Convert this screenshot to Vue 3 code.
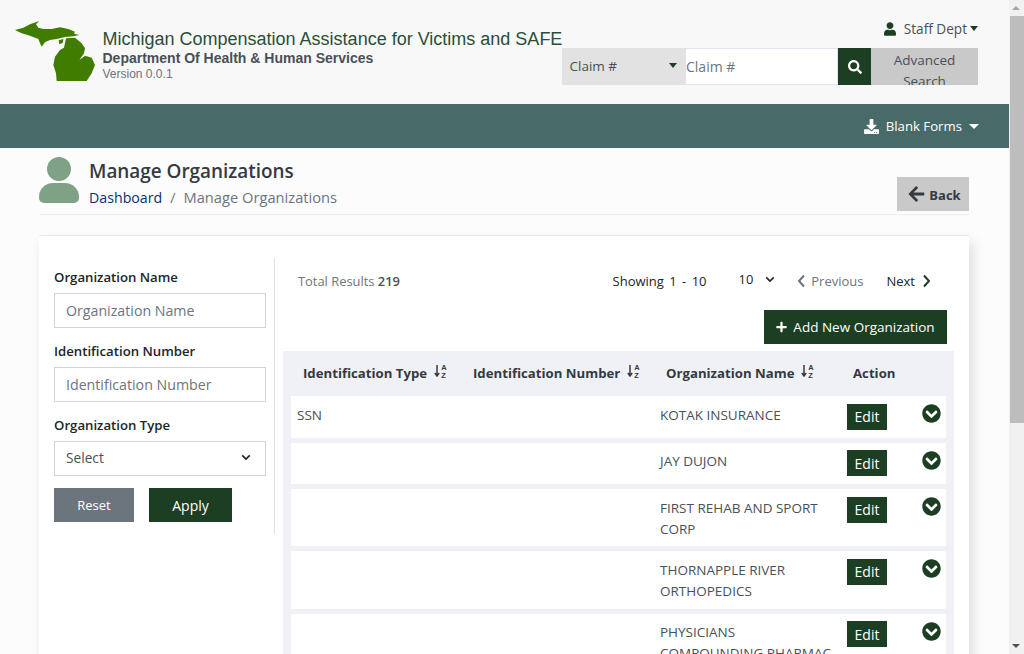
<template>
  <div class="page">
    <div class="main">
      <header class="top">
        <div class="brand">
          <svg class="logo" viewBox="15 15 240 183">
            <path d="M15 45 L40 38 L60 28 L88 18 L78 28 L85 38 L100 42 L125 42 L150 37 L175 42 L195 50 L192 56 L208 60 L190 64 L165 66 L140 72 L120 75 L105 82 L95 95 L90 85 L85 72 L60 62 L35 55 Z" />
            <path d="M168 70 L195 68 L215 85 L225 100 L222 115 L208 135 L225 122 L245 128 L255 150 L245 175 L230 198 L140 198 L138 175 L130 150 L135 125 L150 105 L162 98 Z" />
            <path d="M146 76 L160 72 L158 84 L148 88 Z" />
          </svg>
          <div class="brand-text">
            <div class="app-title">Michigan Compensation Assistance for Victims and SAFE</div>
            <div class="dept">Department Of Health &amp; Human Services</div>
            <div class="version">Version 0.0.1</div>
          </div>
        </div>
        <div class="top-right">
          <div class="user">
            <svg class="user-icon" viewBox="0 0 448 512"><path :d="icons.user" /></svg>
            <span>Staff Dept</span>
            <span class="caret"></span>
          </div>
          <div class="search">
            <div class="search-type">
              <span>Claim #</span>
              <span class="caret"></span>
            </div>
            <input class="search-input" placeholder="Claim #" />
            <button class="search-btn">
              <svg viewBox="0 0 512 512"><path :d="icons.search" /></svg>
            </button>
            <button class="adv-btn">Advanced Search</button>
          </div>
        </div>
      </header>

      <nav class="navbar">
        <svg class="dl-icon" viewBox="0 0 512 512"><path :d="icons.download" /></svg>
        <span>Blank Forms</span>
        <span class="caret caret-white"></span>
      </nav>

      <section class="page-head">
        <div class="avatar">
          <span class="avatar-head"></span>
          <span class="avatar-body"></span>
        </div>
        <div class="head-text">
          <h1>Manage Organizations</h1>
          <div class="crumbs">
            <a>Dashboard</a>
            <span class="sep">/</span>
            <span class="crumb-current">Manage Organizations</span>
          </div>
        </div>
        <button class="back-btn">
          <svg viewBox="0 0 448 512"><path :d="icons.arrowLeft" /></svg>
          Back
        </button>
      </section>

      <section class="card">
        <aside class="filters">
          <label>Organization Name</label>
          <input placeholder="Organization Name" />
          <label>Identification Number</label>
          <input placeholder="Identification Number" />
          <label>Organization Type</label>
          <div class="select-box">
            <span>Select</span>
            <svg class="chev" viewBox="0 0 12 8"><path d="M1.500 1.500 6 6l4.500-4.500" /></svg>
          </div>
          <div class="filter-btns">
            <button class="reset">Reset</button>
            <button class="apply">Apply</button>
          </div>
        </aside>

        <div class="results">
          <div class="toolbar">
            <span class="total">Total Results <b>219</b></span>
            <div class="pager">
              <span class="showing">Showing 1 - 10</span>
              <span class="per-page">10
                <svg class="chev" viewBox="0 0 12 8"><path d="M1.500 1.500 6 6l4.500-4.500" /></svg>
              </span>
              <span class="prev">
                <svg class="nav-chev" viewBox="0 0 9 14"><path d="M7 1.500 2 7l5 5.500" /></svg>
                Previous
              </span>
              <span class="next">
                Next
                <svg class="nav-chev" viewBox="0 0 9 14"><path d="M2 1.500 7 7l-5 5.500" /></svg>
              </span>
            </div>
          </div>
          <div class="add-row">
            <button class="add-btn">
              <svg viewBox="0 0 448 512"><path :d="icons.plus" /></svg>
              Add New Organization
            </button>
          </div>

          <div class="table">
            <div class="thead">
              <div v-for="col in columns" :key="col.label" class="th">
                {{ col.label }}
                <svg v-if="col.sort" class="sort" viewBox="0 0 14 14">
                  <path d="M3 1v11M.8 9l2.200 3 2.200-3" />
                  <text x="7.200" y="6" class="sort-a">A</text>
                  <text x="7.200" y="13.500" class="sort-a">Z</text>
                </svg>
              </div>
            </div>
            <div v-for="row in rows" :key="row.name" class="tr" :class="{ tall: row.tall }">
              <div class="td">{{ row.type }}</div>
              <div class="td">{{ row.name }}</div>
              <div><button class="edit">Edit</button></div>
              <svg class="expand" viewBox="0 0 512 512"><path :d="icons.chevronCircle" /></svg>
            </div>
          </div>
        </div>
      </section>
    </div>

    <div class="scrollbar">
      <span class="arrow-up"></span>
      <span class="thumb"></span>
      <span class="arrow-down"></span>
    </div>
  </div>
</template>

<script setup>
const icons = {
  user: "M224 256c70.7 0 128-57.3 128-128S294.7 0 224 0 96 57.3 96 128s57.3 128 128 128zm89.6 32h-16.7c-22.2 10.2-46.9 16-72.9 16s-50.6-5.8-72.9-16h-16.7C60.2 288 0 348.2 0 422.4V464c0 26.5 21.5 48 48 48h352c26.5 0 48-21.5 48-48v-41.6c0-74.2-60.2-134.4-134.4-134.400z",
  search: "M505 442.7L405.3 343c-4.5-4.5-10.6-7-17-7H372c27.6-35.3 44-79.7 44-128C416 93.1 322.9 0 208 0S0 93.1 0 208s93.1 208 208 208c48.3 0 92.7-16.4 128-44v16.3c0 6.4 2.5 12.5 7 17l99.7 99.7c9.4 9.4 24.6 9.4 33.9 0l28.3-28.3c9.4-9.4 9.4-24.6.1-34zM208 336c-70.7 0-128-57.2-128-128 0-70.7 57.2-128 128-128 70.7 0 128 57.2 128 128 0 70.7-57.2 128-128 128z",
  download: "M216 0h80c13.3 0 24 10.7 24 24v168h87.7c17.8 0 26.7 21.5 14.1 34.1L269.7 378.3c-7.5 7.5-19.8 7.5-27.3 0L90.1 226.1c-12.6-12.6-3.7-34.1 14.1-34.1H192V24c0-13.3 10.7-24 24-24zm296 376v112c0 13.3-10.7 24-24 24H24c-13.3 0-24-10.7-24-24V376c0-13.3 10.7-24 24-24h146.7l49 49c20.1 20.1 52.5 20.1 72.6 0l49-49H488c13.3 0 24 10.7 24 24zm-124 88c0-11-9-20-20-20s-20 9-20 20 9 20 20 20 20-9 20-20zm64 0c0-11-9-20-20-20s-20 9-20 20 9 20 20 20 20-9 20-20z",
  arrowLeft: "M257.5 445.1l-22.2 22.2c-9.4 9.4-24.6 9.4-33.9 0L7 273c-9.4-9.4-9.4-24.6 0-33.9L201.4 44.7c9.4-9.4 24.6-9.4 33.9 0l22.2 22.2c9.5 9.5 9.3 25-.4 34.3L136.6 216H424c13.3 0 24 10.7 24 24v32c0 13.3-10.7 24-24 24H136.6l120.5 114.8c9.8 9.3 10 24.8.4 34.3z",
  plus: "M416 208H272V64c0-17.67-14.33-32-32-32h-32c-17.67 0-32 14.33-32 32v144H32c-17.67 0-32 14.33-32 32v32c0 17.67 14.33 32 32 32h144v144c0 17.67 14.33 32 32 32h32c17.67 0 32-14.33 32-32V304h144c17.67 0 32-14.33 32-32v-32c0-17.67-14.33-32-32-32z",
  chevronCircle: "M504 256c0 137-111 248-248 248S8 393 8 256 119 8 256 8s248 111 248 248zM273 369.9l135.5-135.5c9.4-9.4 9.4-24.6 0-33.9l-17-17c-9.4-9.4-24.6-9.4-33.9 0L256 285.1 154.4 183.5c-9.4-9.4-24.6-9.4-33.9 0l-17 17c-9.4 9.4-9.4 24.6 0 33.9L239 369.9c9.4 9.4 24.6 9.4 34 0z",
};

const columns = [
  { label: "Identification Type", sort: true },
  { label: "Identification Number", sort: true },
  { label: "Organization Name", sort: true },
  { label: "Action", sort: false },
];

const rows = [
  { type: "SSN", name: "KOTAK INSURANCE" },
  { type: "", name: "JAY DUJON" },
  { type: "", name: "FIRST REHAB AND SPORT CORP", tall: true },
  { type: "", name: "THORNAPPLE RIVER ORTHOPEDICS", tall: true },
  { type: "", name: "PHYSICIANS COMPOUNDING PHARMAC", tall: true },
];
</script>

<style>
html,
body {
  margin: 0;
  height: 100%;
  overflow: hidden;
}
</style>

<style scoped>
.page {
  display: flex;
  height: 654px;
  overflow: hidden;
  background: #fcfcfc;
  font-family: "Open Sans", "Noto Sans", sans-serif;
  font-size: 14px;
  color: #495057;
}

.main {
  flex: 1;
  min-width: 0;
}

button {
  font-family: inherit;
  border: none;
  cursor: pointer;
}

svg {
  fill: currentColor;
}

.top {
  display: flex;
  height: 104px;
  background: #f8f8f8;
}

.brand {
  display: flex;
  width: 562px;
  flex: none;
  padding-left: 15px;
  box-sizing: border-box;
}

.logo {
  width: 80px;
  height: 61px;
  margin-top: 20px;
  fill: #407c00;
  flex: none;
}

.brand-text {
  margin-left: 7.500px;
  padding-top: 29px;
  font-family: "Liberation Sans", Arial, sans-serif;
  white-space: nowrap;
}

.app-title {
  font-size: 18px;
  line-height: 21px;
  color: #2a4f38;
}

.dept {
  font-size: 14px;
  line-height: 16px;
  font-weight: 700;
  color: #495057;
}

.version {
  font-size: 12px;
  line-height: 16px;
  color: #6c757d;
}

.top-right {
  width: 416px;
  flex: none;
  padding-top: 19px;
}

.user {
  display: flex;
  justify-content: flex-end;
  align-items: center;
  height: 19px;
  margin-bottom: 10px;
  font-size: 13.600px;
  color: #495057;
}

.user-icon {
  width: 12px;
  height: 14px;
  margin-right: 8px;
  color: #1c3f24;
}

.caret {
  display: inline-block;
  width: 0;
  height: 0;
  margin-left: 3px;
  border-left: 4.500px solid transparent;
  border-right: 4.500px solid transparent;
  border-top: 5px solid #1c3f24;
}

.caret-white {
  border-left-width: 5px;
  border-right-width: 5px;
  border-top-color: #fff;
  margin-left: 7px;
}

.search {
  display: flex;
  height: 37px;
}

.search-type {
  display: flex;
  align-items: center;
  justify-content: space-between;
  width: 123px;
  padding: 0 8px 2px 7.500px;
  box-sizing: border-box;
  background: #e2e2e2;
  font-size: 13.500px;
}

.search-input {
  width: 153px;
  height: 37px;
  padding: 0;
  box-sizing: border-box;
  border: 1px solid #e1e4ec;
  font: 14px "Open Sans", sans-serif;
  outline: none;
  background: #fff;
}

.search-input::placeholder {
  color: #6c757d;
}

.search-btn {
  width: 33px;
  background: #1c3f24;
  color: #fff;
  padding: 0;
  display: flex;
  align-items: center;
  justify-content: center;
}

.search-btn svg {
  width: 14px;
  height: 14px;
}

.adv-btn {
  width: 107px;
  height: 37px;
  overflow: hidden;
  padding: 2px 20px 0;
  background: #c9c9c9;
  color: #495057;
  font-size: 13.500px;
  line-height: 21px;
  display: block;
  text-align: center;
  vertical-align: top;
}

.navbar {
  display: flex;
  align-items: center;
  justify-content: flex-end;
  height: 44px;
  padding-right: 30px;
  background: #486a68;
  color: #fff;
  font-size: 13.200px;
}

.dl-icon {
  width: 15px;
  height: 15px;
  margin-right: 7px;
}

.page-head {
  display: flex;
  margin: 0 40px 0 39px;
  height: 66px;
  border-bottom: 1px solid #efefef;
}

.avatar {
  width: 40px;
  margin-top: 9px;
  flex: none;
}

.avatar-head {
  display: block;
  width: 24px;
  height: 24px;
  margin: 0 auto;
  border-radius: 50%;
  background: #7fa287;
}

.avatar-body {
  display: block;
  width: 40px;
  height: 20px;
  margin-top: 2px;
  border-radius: 14px 14px 5px 5px;
  background: #7fa287;
}

.head-text {
  margin-left: 10px;
  padding-top: 9px;
}

h1 {
  margin: 0;
  font-size: 18.900px;
  line-height: 28px;
  font-weight: 600;
  color: #343a40;
}

.crumbs {
  font-size: 14.200px;
  line-height: 24px;
  color: #6c757d;
}

.crumbs a {
  color: #0a3071;
}

.crumb-current {
  font-size: 14.700px;
}

.sep {
  margin: 0 8px;
}

.back-btn {
  display: flex;
  align-items: center;
  justify-content: center;
  margin-left: auto;
  margin-top: 29px;
  width: 72px;
  height: 34px;
  padding: 1px 0 0 3px;
  box-sizing: border-box;
  background: #c9c9c9;
  color: #343a40;
  font-size: 13px;
  font-weight: 700;
}

.back-btn svg {
  width: 17px;
  height: 18px;
  margin-right: 4px;
  margin-top: -2px;
}

.card {
  display: flex;
  margin: 21px 40px 0 39px;
  background: #fff;
  box-shadow: 4px 6px 12px rgba(0, 0, 0, 0.12), 0 -1px 0 #ededed;
  padding: 22px 15px 0;
  align-items: flex-start;
}

.filters {
  width: 212px;
  flex: none;
  display: flex;
  flex-direction: column;
  padding-right: 8px;
  padding-bottom: 12px;
  border-right: 1px solid #dfe1e6;
}

.filters label {
  font-size: 13.200px;
  line-height: 20px;
  font-weight: 600;
  color: #212529;
  margin: 9px 0 6px;
}

.filters input,
.select-box {
  height: 35px;
  box-sizing: border-box;
  border: 1px solid #ced4da;
  background: #fff;
  font: 14.200px "Open Sans", sans-serif;
  width: 212px;
}

.filters input {
  padding: 0 11px;
  outline: none;
  margin-bottom: 4px;
}

.filters input::placeholder {
  color: #6c757d;
}

.select-box {
  display: flex;
  align-items: center;
  justify-content: space-between;
  padding: 0 14px 2px 11px;
  font-size: 13.700px;
  color: #495057;
}

.chev {
  width: 10px;
  height: 7px;
  fill: none;
  stroke: #212529;
  stroke-width: 2;
}

.filter-btns {
  display: flex;
  gap: 15px;
  margin-top: 12px;
}

.filter-btns button {
  height: 34px;
  color: #fff;
  font-size: 13px;
  padding: 0;
}

.reset {
  width: 80px;
  background: #6c757d;
}

.apply {
  width: 83px;
  background: #1c3f24;
  font-size: 14px !important;
}

.results {
  flex: 1;
  min-width: 0;
  margin-left: 8px;
}

.toolbar {
  display: flex;
  align-items: center;
  height: 46px;
  padding: 0 23px 0 15px;
  font-size: 12.900px;
  color: #6c757d;
}

.total b {
  font-weight: 600;
  color: #495057;
}

.pager {
  display: flex;
  align-items: center;
  margin-left: auto;
  color: #212529;
}

.showing {
  font-size: 13px;
  word-spacing: 2px;
}

.per-page {
  display: flex;
  align-items: center;
  margin-left: 32px;
  gap: 12px;
  margin-top: -4px;
}

.prev {
  display: flex;
  align-items: center;
  margin-left: 22px;
  color: #6c757d;
  font-size: 13px;
}

.next {
  display: flex;
  align-items: center;
  margin-left: 23px;
  font-size: 13px;
}

.nav-chev {
  width: 9px;
  height: 14px;
  fill: none;
  stroke: currentColor;
  stroke-width: 2;
}

.prev .nav-chev {
  margin-right: 5px;
}

.next .nav-chev {
  margin-left: 7px;
  color: #1c3f24;
}

.add-row {
  display: flex;
  justify-content: flex-end;
  padding: 6px 7px 7px 0;
}

.add-btn {
  display: flex;
  align-items: center;
  justify-content: center;
  gap: 6px;
  width: 183px;
  height: 34px;
  padding: 0;
  background: #1c3f24;
  color: #fff;
  font-size: 13.500px;
}

.add-btn svg {
  width: 11px;
  height: 12px;
}

.table {
  background: #f0f1f7;
  padding: 0 8px;
}

.thead {
  display: grid;
  grid-template-columns: 170px 193px 187px 1fr;
  height: 45px;
  margin: 0 -8px;
  padding: 0 0 2px 20px;
  box-sizing: border-box;
  align-items: center;
}

.th {
  font-size: 13.200px;
  font-weight: 700;
  color: #343a40;
  white-space: nowrap;
}

.sort {
  width: 14px;
  height: 14px;
  margin-left: 3px;
  vertical-align: 0;
  stroke: #343a40;
  stroke-width: 1.500;
  fill: none;
}

.sort-a {
  font: 700 7.500px "Liberation Sans", sans-serif;
  fill: #343a40;
  stroke: none;
}

.tr {
  display: grid;
  grid-template-columns: 363px 187px 75px 1fr;
  align-items: start;
  height: 41.500px;
  margin-bottom: 5px;
  padding-left: 6px;
  box-sizing: border-box;
  background: #fff;
}

.tr.tall {
  height: 57.400px;
}

.td {
  padding-top: 8.600px;
  padding-right: 10px;
  font-size: 13.500px;
  line-height: 21px;
  color: #495057;
}

.edit {
  margin-top: 7.500px;
  width: 40px;
  height: 26px;
  padding: 0;
  background: #1c3f24;
  color: #fff;
  font-size: 14px;
}

.expand {
  width: 19px;
  height: 19px;
  margin-top: 8px;
  color: #1c3f24;
}

.scrollbar {
  position: relative;
  width: 15px;
  flex: none;
  background: #f1f1f1;
}

.thumb {
  position: absolute;
  top: 16px;
  left: 1px;
  right: 0;
  height: 407px;
  background: #bdbdbd;
}

.arrow-up,
.arrow-down {
  position: absolute;
  left: 3px;
  width: 0;
  height: 0;
  border-left: 4px solid transparent;
  border-right: 4px solid transparent;
}

.arrow-up {
  top: 6px;
  border-bottom: 4px solid #a3a3a3;
}

.arrow-down {
  bottom: 6px;
  border-top: 4px solid #505050;
}
</style>
